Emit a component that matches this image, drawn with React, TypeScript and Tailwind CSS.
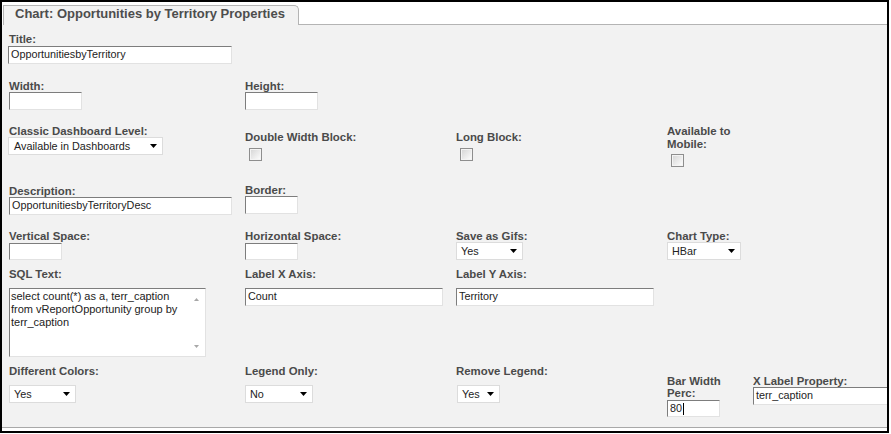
import React from "react";

const lbl = "block font-bold text-[11.4px] leading-[12px] text-[#4a4a4a] whitespace-nowrap";
const inputBase =
  "block bg-white border border-t-[#7d7d7d] border-l-[#7d7d7d] border-r-[#e2e2e2] border-b-[#e2e2e2] text-[10.8px] text-[#222] leading-[15px] pl-[2px] whitespace-nowrap overflow-hidden";

function Arrow() {
  return (
    <svg width="7" height="4" viewBox="0 0 7 4" className="shrink-0">
      <polygon points="0,0 7,0 3.5,4" fill="#000" />
    </svg>
  );
}

function Sel({ text, cls }: { text: string; cls: string }) {
  return (
    <div className={cls}>
      <span className="text-[10.8px] text-[#222] leading-[16px]">{text}</span>
      <Arrow />
    </div>
  );
}

function Check({ cls }: { cls: string }) {
  return (
    <div className={cls}>
      <div className="w-full h-full bg-gradient-to-br from-[#d8d8d8] to-[#fbfbfb]" />
    </div>
  );
}

const selCls = "flex items-center justify-between bg-white border border-[#dcdcdc] h-[18px] pl-[4px] pr-[5px]";
const chkCls = "w-[13px] h-[13px] border border-[#8e8e8e] p-[1px] bg-[#f4f4f4]";

export default function App() {
  return (
    <div className="w-[891px] h-[434px] bg-white font-['Liberation_Sans',Arial,sans-serif]">
      <div className="w-[889px] h-[433px] border-2 border-black flex flex-col overflow-hidden">
        {/* tab strip */}
        <div className="flex items-end h-[23px] shrink-0 bg-white">
          <div className="ml-px w-[296px] h-[20px] border-t border-l border-r border-[#b4b4b4] rounded-tr-[5px] bg-[#f2f2f2] pl-[11px]">
            <span className="block font-bold text-[13px] leading-[15px] text-[#4d4d4d] whitespace-nowrap">
              Chart: Opportunities by Territory Properties
            </span>
          </div>
          <div className="flex-1 border-b border-[#b4b4b4]" />
        </div>

        {/* content */}
        <div className="h-[402px] shrink-0 bg-[#f2f2f2] border-b border-[#a9a9a9] pl-[7px] flex flex-col box-content overflow-hidden">
          {/* row 1 */}
          <div className="flex h-[47px] shrink-0">
            <div className="w-[236px] shrink-0 pt-[8px]">
              <label className={lbl}>Title:</label>
              <div className={`${inputBase} mt-[1px] ml-[-1px] w-[224px] h-[18px]`}>OpportunitiesbyTerritory</div>
            </div>
          </div>
          {/* row 2 */}
          <div className="flex h-[46px] shrink-0">
            <div className="w-[236px] shrink-0 pt-[8px]">
              <label className={lbl}>Width:</label>
              <div className={`${inputBase} w-[73px] h-[18px]`}></div>
            </div>
            <div className="w-[211px] shrink-0 pt-[8px]">
              <label className={lbl}>Height:</label>
              <div className={`${inputBase} w-[73px] h-[18px]`}></div>
            </div>
          </div>
          {/* row 3 */}
          <div className="flex h-[62px] shrink-0">
            <div className="w-[236px] shrink-0 pt-[7px]">
              <label className={lbl}>Classic Dashboard Level:</label>
              <Sel text="Available in Dashboards" cls={`${selCls} ml-[-1px] w-[155px] pl-[5px]`} />
            </div>
            <div className="w-[211px] shrink-0 pt-[13px]">
              <label className={lbl}>Double Width Block:</label>
              <Check cls={`${chkCls} mt-[5px] ml-[4px]`} />
            </div>
            <div className="w-[211px] shrink-0 pt-[13px]">
              <label className={lbl}>Long Block:</label>
              <Check cls={`${chkCls} mt-[5px] ml-[4px]`} />
            </div>
            <div className="w-[150px] shrink-0 pt-[7px]">
              <label className="block font-bold text-[11.4px] leading-[13px] text-[#4a4a4a]">
                Available to
                <br />
                Mobile:
              </label>
              <Check cls={`${chkCls} mt-[3px] ml-[4px]`} />
            </div>
          </div>
          {/* row 4 */}
          <div className="flex h-[45px] shrink-0">
            <div className="w-[236px] shrink-0 pt-[5px]">
              <label className={lbl}>Description:</label>
              <div className={`${inputBase} w-[223px] h-[18px]`}>OpportunitiesbyTerritoryDesc</div>
            </div>
            <div className="w-[211px] shrink-0 pt-[4px]">
              <label className={lbl}>Border:</label>
              <div className={`${inputBase} w-[53px] h-[18px]`}></div>
            </div>
          </div>
          {/* row 5 */}
          <div className="flex h-[39px] shrink-0">
            <div className="w-[236px] shrink-0 pt-[5px]">
              <label className={lbl}>Vertical Space:</label>
              <div className={`${inputBase} mt-[1px] w-[53px] h-[17px]`}></div>
            </div>
            <div className="w-[211px] shrink-0 pt-[5px]">
              <label className={lbl}>Horizontal Space:</label>
              <div className={`${inputBase} mt-[1px] w-[53px] h-[17px]`}></div>
            </div>
            <div className="w-[211px] shrink-0 pt-[5px]">
              <label className={lbl}>Save as Gifs:</label>
              <Sel text="Yes" cls={`${selCls} w-[67px]`} />
            </div>
            <div className="w-[150px] shrink-0 pt-[5px]">
              <label className={lbl}>Chart Type:</label>
              <Sel text="HBar" cls={`${selCls} w-[74px]`} />
            </div>
          </div>
          {/* row 6 */}
          <div className="flex h-[96px] shrink-0">
            <div className="w-[236px] shrink-0 pt-[4px]">
              <label className={lbl}>SQL Text:</label>
              <div className="mt-[8px] w-[197px] h-[69px] flex bg-white border border-t-[#7d7d7d] border-l-[#7d7d7d] border-r-[#e2e2e2] border-b-[#e2e2e2]">
                <textarea
                  readOnly
                  className="flex-1 resize-none overflow-hidden outline-none bg-white text-[11px] leading-[13px] text-[#222] pl-px pt-px font-['Liberation_Sans',Arial,sans-serif]"
                  value={"select count(*) as a, terr_caption from vReportOpportunity group by terr_caption"}
                />
                <div className="w-[17px] flex flex-col items-center justify-between pt-[9px] pb-[8px]">
                  <svg width="5" height="3" viewBox="0 0 5 3">
                    <polygon points="0,3 5,3 2.5,0" fill="#a8a8a8" />
                  </svg>
                  <svg width="5" height="3" viewBox="0 0 5 3">
                    <polygon points="0,0 5,0 2.5,3" fill="#a8a8a8" />
                  </svg>
                </div>
              </div>
            </div>
            <div className="w-[211px] shrink-0 pt-[4px]">
              <label className={lbl}>Label X Axis:</label>
              <div className={`${inputBase} mt-[8px] w-[198px] h-[18px]`}>Count</div>
            </div>
            <div className="w-[211px] shrink-0 pt-[4px]">
              <label className={lbl}>Label Y Axis:</label>
              <div className={`${inputBase} mt-[8px] w-[198px] h-[18px]`}>Territory</div>
            </div>
          </div>
          {/* row 7 */}
          <div className="flex h-[67px] shrink-0">
            <div className="w-[236px] shrink-0 pt-[5px]">
              <label className={lbl}>Different Colors:</label>
              <Sel text="Yes" cls={`${selCls} mt-[8px] w-[67px]`} />
            </div>
            <div className="w-[211px] shrink-0 pt-[5px]">
              <label className={lbl}>Legend Only:</label>
              <Sel text="No" cls={`${selCls} mt-[8px] w-[68px]`} />
            </div>
            <div className="w-[211px] shrink-0 pt-[5px]">
              <label className={lbl}>Remove Legend:</label>
              <Sel text="Yes" cls={`${selCls} mt-[8px] ml-px w-[43px]`} />
            </div>
            <div className="w-[86px] shrink-0 pt-[15px]">
              <label className="block font-bold text-[11.4px] leading-[12px] text-[#4a4a4a]">
                Bar Width
                <br />
                Perc:
              </label>
              <div className={`${inputBase} mt-[1px] w-[53px] h-[17px] flex items-center`}>
                <span>80</span>
                <span className="inline-block w-px h-[12px] bg-black ml-px" />
              </div>
            </div>
            <div className="flex-1 pt-[15px] overflow-hidden">
              <label className={lbl}>X Label Property:</label>
              <div className={`${inputBase} w-[160px] h-[18px]`}>terr_caption</div>
            </div>
          </div>
        </div>
      </div>
    </div>
  );
}
